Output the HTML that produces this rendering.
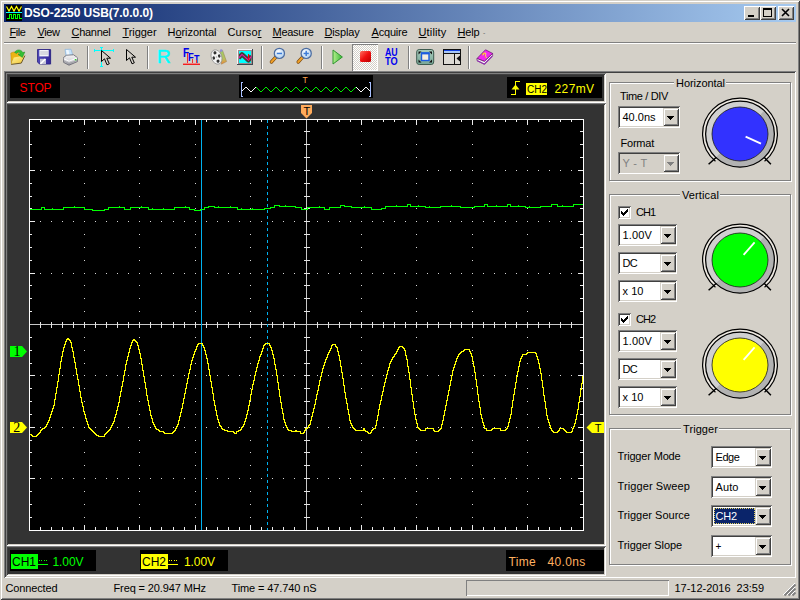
<!DOCTYPE html><html><head><meta charset="utf-8"><title>DSO-2250 USB(7.0.0.0)</title><style>
*{box-sizing:border-box}
html,body{margin:0;padding:0}
body{width:800px;height:600px;overflow:hidden;background:#D4D0C8;position:relative;font-family:"Liberation Sans",sans-serif;font-size:11px;color:#000}
.a{position:absolute}
.t{position:absolute;white-space:nowrap;line-height:14px;height:14px}
.sunk{position:absolute;box-shadow:inset 1px 1px 0 #808080,inset -1px -1px 0 #fff,inset 2px 2px 0 #404040,inset -2px -2px 0 #D4D0C8}
.btn{position:absolute;background:#D4D0C8;box-shadow:inset 1px 1px 0 #fff,inset -1px -1px 0 #404040,inset 2px 2px 0 #D4D0C8,inset -2px -2px 0 #808080}
.cbtn{position:absolute;background:#D4D0C8;box-shadow:inset 1px 1px 0 #D4D0C8,inset -1px -1px 0 #404040,inset 2px 2px 0 #fff,inset -2px -2px 0 #808080}
.grp{position:absolute;border:1px solid #808080;box-shadow:1px 1px 0 #fff,inset 1px 1px 0 #fff}
.cap{position:absolute;background:#D4D0C8;white-space:nowrap;line-height:14px;height:14px;text-align:center}
.sep{position:absolute;width:2px;border-left:1px solid #808080;border-right:1px solid #fff}
.u{text-decoration:underline}
svg{position:absolute;overflow:visible}
</style></head><body>
<div class="a" style="left:0px;top:0px;width:800px;height:600px;box-shadow:inset 1px 1px 0 #D4D0C8,inset -1px -1px 0 #404040,inset 2px 2px 0 #fff,inset -2px -2px 0 #808080"></div>
<div class="a" style="left:4px;top:4px;width:792px;height:18px;background:linear-gradient(to right,#0A246A 0%,#A6CAF0 100%)"></div>
<svg class="a" style="left:6px;top:5px" width="16" height="16" shape-rendering="crispEdges"><rect width="16" height="16" fill="#000"/><path d="M0.5 1.5 L3 6 L5.5 1.5 L8 6 L10.5 1.5 L13 6 L15.5 1.5" fill="none" stroke="#FFFF00" stroke-width="1.2" shape-rendering="auto"/><rect x="0" y="7" width="16" height="1" fill="#00FFFF"/><path d="M1 13.5H3.5V9.5H5.5V13.5H7.5V9.5H9.5V13.5H11.5V9.5H13.5V13.5H15.5" fill="none" stroke="#00FF00" stroke-width="1"/></svg>
<div class="t" style="left:24px;top:6px;color:#fff;font-weight:bold;font-size:12px;letter-spacing:-0.051px;">DSO-2250 USB(7.0.0.0)</div>
<div class="btn" style="left:744px;top:6px;width:16px;height:14px;"></div>
<div class="btn" style="left:760px;top:6px;width:16px;height:14px;"></div>
<div class="btn" style="left:778px;top:6px;width:16px;height:14px;"></div>
<svg class="a" style="left:744px;top:6px" width="50" height="14" shape-rendering="crispEdges"><rect x="4" y="9" width="6" height="2" fill="#000"/><rect x="19.5" y="2.5" width="8" height="8" fill="none" stroke="#000"/><rect x="19" y="2" width="9" height="2" fill="#000"/><path d="M38 3 L45 10 M45 3 L38 10" stroke="#000" stroke-width="1.6" shape-rendering="auto" fill="none"/></svg>
<div class="t" style="left:9.5px;top:25px;font-size:11px;letter-spacing:-0.438px;"><span class="u">F</span>ile</div>
<div class="t" style="left:37.5px;top:25px;font-size:11px;letter-spacing:-0.414px;"><span class="u">V</span>iew</div>
<div class="t" style="left:71.5px;top:25px;font-size:11px;letter-spacing:-0.286px;"><span class="u">C</span>hannel</div>
<div class="t" style="left:122.5px;top:25px;font-size:11px;letter-spacing:-0.062px;"><span class="u">T</span>rigger</div>
<div class="t" style="left:167.5px;top:25px;font-size:11px;letter-spacing:-0.055px;">H<span class="u">o</span>rizontal</div>
<div class="t" style="left:227.5px;top:25px;font-size:11px;letter-spacing:0.164px;">Curso<span class="u">r</span></div>
<div class="t" style="left:272.5px;top:25px;font-size:11px;letter-spacing:-0.259px;"><span class="u">M</span>easure</div>
<div class="t" style="left:324.5px;top:25px;font-size:11px;letter-spacing:-0.154px;"><span class="u">D</span>isplay</div>
<div class="t" style="left:371.5px;top:25px;font-size:11px;letter-spacing:-0.188px;"><span class="u">A</span>cquire</div>
<div class="t" style="left:418.5px;top:25px;font-size:11px;letter-spacing:0.156px;"><span class="u">U</span>tility</div>
<div class="t" style="left:457.5px;top:25px;font-size:11px;letter-spacing:-0.160px;"><span class="u">H</span>elp</div>
<div class="t" style="left:483px;top:26px;font-size:7px;color:#666">-</div>
<div class="a" style="left:4px;top:42px;width:792px;height:2px;border-top:1px solid #808080;border-bottom:1px solid #fff"></div>
<div class="sep" style="left:87px;top:46px;width:2px;height:23px;"></div>
<div class="sep" style="left:147px;top:46px;width:2px;height:23px;"></div>
<div class="sep" style="left:261px;top:46px;width:2px;height:23px;"></div>
<div class="sep" style="left:321px;top:46px;width:2px;height:23px;"></div>
<div class="sep" style="left:408px;top:46px;width:2px;height:23px;"></div>
<div class="sep" style="left:468px;top:46px;width:2px;height:23px;"></div>
<div class="a" style="left:352px;top:44px;width:26px;height:27px;background-color:#D4D0C8;background-image:linear-gradient(45deg,#fff 25%,transparent 25%,transparent 75%,#fff 75%),linear-gradient(45deg,#fff 25%,transparent 25%,transparent 75%,#fff 75%);background-size:2px 2px;background-position:0 0,1px 1px;box-shadow:inset 1px 1px 0 #808080,inset -1px -1px 0 #fff"></div>
<svg class="a" style="left:0;top:0" width="800" height="72">
<defs><linearGradient id="gF" x1="0" y1="0" x2="1" y2="1"><stop offset="0" stop-color="#FFF59A"/><stop offset="1" stop-color="#F2C230"/></linearGradient><linearGradient id="gP" x1="0" y1="0" x2="1" y2="0"><stop offset="0" stop-color="#B4F08C"/><stop offset="1" stop-color="#38B838"/></linearGradient><linearGradient id="gR" x1="0" y1="0" x2="1" y2="1"><stop offset="0" stop-color="#FF7060"/><stop offset=".5" stop-color="#F01010"/><stop offset="1" stop-color="#B80000"/></linearGradient><linearGradient id="gM" x1="0" y1="0" x2="0" y2="1"><stop offset="0" stop-color="#A8CCBC"/><stop offset="1" stop-color="#78A898"/></linearGradient><radialGradient id="gL" cx=".4" cy=".35" r=".7"><stop offset="0" stop-color="#FFFFFF"/><stop offset="1" stop-color="#A8CCF0"/></radialGradient><linearGradient id="gS" x1="0" y1="0" x2="1" y2="0"><stop offset="0" stop-color="#5048B8"/><stop offset="1" stop-color="#34289A"/></linearGradient><linearGradient id="gPr" x1="0" y1="0" x2="0" y2="1"><stop offset="0" stop-color="#F6F6F6"/><stop offset=".45" stop-color="#DCDCE0"/><stop offset="1" stop-color="#9A9AA2"/></linearGradient></defs>
<path d="M10.8 53 L13.4 52 L18 52.5 L19 54 L22.6 54.2 L22.6 58 L12.4 60 L11.4 64.2 Z" fill="#ECB414" stroke="#B88A10" stroke-width=".5"/><path d="M11.4 64.3 L13.8 57.6 L24.8 55.6 L21.2 63 Z" fill="url(#gF)"/><path d="M11.2 64.4 L21.3 63.1 L24.9 55.6" fill="none" stroke="#5E4A1C" stroke-width=".9"/><path d="M14.6 52.4 C16 49.4 21.2 48.8 22.8 52.6 L24.8 52 L22.4 57.4 L18 54.4 L20.4 53.8 C19.4 52 17.6 51.8 16.6 53.4 Z" fill="#34C034" stroke="#1E8A1E" stroke-width=".5"/>
<path d="M38 49.8H51.4V64.6H39.8L38 62.8Z" fill="#8890B8" opacity=".6"/><path d="M37.5 49.5H50.5V64H39.5L37.5 62Z" fill="url(#gS)" stroke="#282080" stroke-width=".8"/><rect x="39.3" y="50" width="9.4" height="6.4" fill="#F4F4F8"/><path d="M40.2 52H48M40.2 54H48" stroke="#B4B4C4" stroke-width=".9"/><rect x="40" y="58.8" width="6" height="5.2" fill="#C4C4D8"/><path d="M40.4 63.8 L45.4 59" stroke="#fff" stroke-width="1.6"/>
<path d="M65 49.4 L71 49.2 L72.8 55.2 L66 56.2 Z" fill="#C4E2FA" stroke="#8CB4DC" stroke-width=".7"/><path d="M66 50 L68.5 50 L69.6 55 L67 55.6Z" fill="#EEF7FF"/><path d="M63.6 57.4 L66.6 55.2 L73.6 54.8 L77.4 57.6 L77.4 61.6 L69 65.2 L63.6 62.4 Z" fill="url(#gPr)" stroke="#62626C" stroke-width=".8"/><path d="M63.8 58.8 L69 61.2 L77.2 58" fill="none" stroke="#FFFFFF" stroke-width=".9"/><path d="M64 61 L69 63.6 L77.2 60.4" fill="none" stroke="#9A9AA0" stroke-width=".8"/><rect x="74.8" y="59" width="1.5" height="1.4" fill="#30D030"/>
<path d="M94 50.5H114M101.5 47V67M94.5 49V52M113.5 49V52M100 47.5H103M100 66.5H103" stroke="#00FFFF" stroke-width="1" fill="none" shape-rendering="crispEdges"/>
<path transform="translate(101,50)" d="M0.5 0.5V11.5L3.5 8.8L6 14.8L8.3 13.8L5.8 8.2H9.5Z" fill="#D4D0C8" stroke="#000" stroke-width="1" stroke-linejoin="miter"/>
<path transform="translate(126,49)" d="M0.5 0.5V11.5L3.5 8.8L6 14.8L8.3 13.8L5.8 8.2H9.5Z" fill="#D4D0C8" stroke="#000" stroke-width="1" stroke-linejoin="miter"/>
<defs><clipPath id="cS"><rect x="239" y="51" width="12.5" height="12.5"/></clipPath></defs><g shape-rendering="crispEdges"><rect x="237" y="49" width="16" height="16" fill="#404850"/><rect x="237" y="49" width="15" height="15" fill="#F4F4F8"/><rect x="238" y="50" width="14" height="14" fill="#A08888"/><rect x="239" y="51" width="12" height="12" fill="#00FFFF"/></g><g clip-path="url(#cS)"><path d="M238.6 58 L242 54.4 L248.5 60.2 L251.6 56" fill="none" stroke="#3E4436" stroke-width="4.6" stroke-linejoin="round"/><path d="M238.6 58 L242 54.4 L248.5 60.2 L251.6 56" fill="none" stroke="#F010B0" stroke-width="1.1"/><path d="M248.5 54V60" stroke="#FF0000" stroke-width="1.1"/></g>
<path d="M275.79999999999995 57.2 L271.4 62" stroke="#7A4A10" stroke-width="3.4" stroke-linecap="round"/><path d="M275.79999999999995 57.2 L271.4 62" stroke="#F0A028" stroke-width="2" stroke-linecap="round"/><circle cx="279.4" cy="53.4" r="5.1" fill="url(#gL)" stroke="#4C6CA0" stroke-width="1.2"/><rect x="276.79999999999995" y="52.7" width="5.2" height="1.5" fill="#3C7CD8"/>
<path d="M302.59999999999997 57.2 L298.2 62" stroke="#7A4A10" stroke-width="3.4" stroke-linecap="round"/><path d="M302.59999999999997 57.2 L298.2 62" stroke="#F0A028" stroke-width="2" stroke-linecap="round"/><circle cx="306.2" cy="53.4" r="5.1" fill="url(#gL)" stroke="#4C6CA0" stroke-width="1.2"/><rect x="303.59999999999997" y="52.7" width="5.2" height="1.5" fill="#3C7CD8"/><rect x="305.45" y="50.8" width="1.5" height="5.2" fill="#3C7CD8"/>
<path d="M333 50 L333 64 L342.4 57Z" fill="url(#gP)" stroke="#2E962E" stroke-width="1" stroke-linejoin="round"/>
<rect x="360" y="51" width="11" height="11" rx="1.5" fill="url(#gR)"/>
<defs><linearGradient id="gC" x1="0" y1="0" x2="0" y2="1"><stop offset="0" stop-color="#9CCB6A"/><stop offset=".6" stop-color="#B8C060"/><stop offset="1" stop-color="#F08838"/></linearGradient></defs><path d="M220.3 50.8 L222.6 50.4 L226.6 61.6 L221.4 64.2 Z" fill="url(#gC)" stroke="#8A7040" stroke-width=".4"/><circle cx="221.2" cy="50.6" r="1.3" fill="#9090D8"/><g transform="rotate(-20 216.5 57)"><ellipse cx="216.5" cy="57" rx="5.2" ry="7.4" fill="#F2F2F2" stroke="#8C8C8C" stroke-width=".7"/><ellipse cx="216.5" cy="52.6" rx="1.5" ry="1.6" fill="#303030"/><ellipse cx="216.5" cy="61.4" rx="1.5" ry="1.6" fill="#303030"/><ellipse cx="213.6" cy="57" rx="1.2" ry="1.7" fill="#303030"/><ellipse cx="219.4" cy="57" rx="1.2" ry="1.7" fill="#303030"/><circle cx="216.5" cy="57" r=".8" fill="#B0B0B0"/></g>
<rect x="416.7" y="49.5" width="17" height="15" rx="2.5" fill="url(#gM)" stroke="#3E5C50" stroke-width="1"/><path d="M418.5 51.5h3l-3 3zM432 51.5h-3l3 3zM418.5 62.5h3l-3 -3zM432 62.5h-3l3 -3z" fill="#101010"/><rect x="421.5" y="53" width="7.5" height="7.5" fill="#F4EEE0" stroke="#1C5CE0" stroke-width="1.4"/><rect x="421" y="52.4" width="8.5" height="2" fill="#1C5CE0"/>
<g shape-rendering="crispEdges"><rect x="443.5" y="49.5" width="17" height="15" fill="#DCDAD4" stroke="#101010"/><rect x="444" y="50" width="16" height="1" fill="#1040E0"/><rect x="444" y="51" width="16" height="2" fill="#A8C8F8"/><rect x="443" y="53" width="18" height="1" fill="#101010"/><rect x="454" y="53" width="1" height="11" fill="#101010"/></g><path d="M460 55.5 L456.5 58.5 L460 61.5Z" fill="#101010"/>
<path d="M477 58.5 L485.5 49.8 L492.6 53.4 L484.4 61.4Z" fill="#F028F0" stroke="#701878" stroke-width=".8"/><path d="M477 58.5 L477 60.6 L484.4 64.2 L492.6 55.6 L492.6 53.4 L484.4 61.4Z" fill="#F4F4F4" stroke="#701878" stroke-width=".8"/><path d="M477.4 60.8 L484.4 64.2 L492.4 56" fill="none" stroke="#9030B0" stroke-width="1.1"/>
</svg>
<div class="t" style="left:157px;top:47px;font-size:19px;line-height:20px;height:20px;color:#00FFFF;-webkit-text-stroke:0.5px #00FFFF">R</div>
<div class="t" style="left:182.5px;top:46px;font-size:12px;font-weight:bold;color:#0000E8;transform:scaleX(.85);transform-origin:0 0">F</div>
<div class="t" style="left:188px;top:50px;font-size:10.5px;font-weight:bold;color:#0000E8;transform:scaleX(.9);transform-origin:0 0">F</div>
<div class="t" style="left:193.5px;top:53px;font-size:10px;font-weight:bold;color:#0000E8;transform:scaleX(.9);transform-origin:0 0">T</div>
<div class="a" style="left:183px;top:63px;width:17px;height:1px;background:#F08080"></div>
<div class="a" style="left:183px;top:64px;width:17px;height:1px;background:#F02020"></div>
<div class="a" style="left:187px;top:53px;width:1px;height:10px;background:#F03030"></div>
<div class="a" style="left:192px;top:59px;width:1px;height:4px;background:#F03030"></div>
<div class="a" style="left:196px;top:60px;width:1px;height:3px;background:#F03030"></div>
<div class="t" style="left:482.5px;top:50.5px;font-size:8px;font-weight:bold;color:#FFE000;line-height:10px;height:10px;transform:rotate(-35deg)">?</div>
<div class="t" style="left:385px;top:48px;font-size:10px;font-weight:bold;color:#0000F0;line-height:9px;height:9px;transform:scaleX(.88);transform-origin:0 0">AU</div>
<div class="t" style="left:385px;top:56.5px;font-size:10px;font-weight:bold;color:#0000F0;line-height:9px;height:9px;transform:scaleX(.92);transform-origin:0 0">TO</div>
<div class="sunk" style="left:4px;top:71px;width:792px;height:507px;"></div>
<div class="sunk" style="left:6px;top:73px;width:600px;height:30px;background:#333333"></div>
<div class="sunk" style="left:6px;top:103px;width:600px;height:443px;background:#333333"></div>
<div class="sunk" style="left:6px;top:546px;width:600px;height:30px;background:#333333"></div>
<div class="a" style="left:10px;top:77px;width:50px;height:21px;background:#000"></div>
<div class="t" style="left:19.5px;top:81px;color:#FF0000;font-size:12px;letter-spacing:-0.117px;">STOP</div>
<div class="a" style="left:239px;top:75px;width:134px;height:23px;background:#000"></div>
<div class="a" style="left:507px;top:77px;width:95px;height:21px;background:#000"></div>
<div class="a" style="left:526px;top:83px;width:21px;height:12px;background:#FFFF00"></div>
<div class="t" style="left:527px;top:82.7px;color:#000;font-size:10px;">CH2</div>
<div class="t" style="left:554.5px;top:81.6px;color:#FFFF00;font-size:12px;letter-spacing:0.394px;">227mV</div>
<div class="a" style="left:10px;top:550px;width:86px;height:21px;background:#000"></div>
<div class="a" style="left:11px;top:554px;width:27px;height:15px;background:#00FF00"></div>
<div class="t" style="left:12px;top:555px;color:#000;font-size:12px;">CH1</div>
<div class="t" style="left:52.5px;top:555px;color:#00FF00;font-size:12px;letter-spacing:-0.072px;">1.00V</div>
<div class="a" style="left:140px;top:550px;width:88px;height:21px;background:#000"></div>
<div class="a" style="left:141px;top:554px;width:27px;height:15px;background:#FFFF00"></div>
<div class="t" style="left:142px;top:555px;color:#000;font-size:12px;">CH2</div>
<div class="t" style="left:184px;top:555px;color:#FFFF00;font-size:12px;letter-spacing:-0.072px;">1.00V</div>
<div class="a" style="left:506px;top:550px;width:98px;height:21px;background:#000"></div>
<div class="t" style="left:508.5px;top:555px;color:#FFB060;font-size:12px;letter-spacing:0.316px;">Time</div>
<div class="t" style="left:547.5px;top:555px;color:#FFB060;font-size:12px;letter-spacing:0.328px;">40.0ns</div>
<svg class="a" style="left:0;top:0" width="800" height="600" shape-rendering="crispEdges">
<path d="M242 90.5h1M243 89.5h1M244 88.5h1M245 87.5h1M246 87.5h1M247 88.5h1M248 89.5h1M249 90.5h1M250 91.5h1M251 91.5h1M252 90.5h1M253 89.5h1M254 88.5h1M255 87.5h1M356 87.5h1M357 88.5h1M358 89.5h1M359 90.5h1M360 91.5h1M361 91.5h1M362 90.5h1M363 89.5h1M364 88.5h1M365 87.5h1M366 87.5h1M367 88.5h1M368 89.5h1M369 90.5h1" stroke="#fff" fill="none"/>
<path d="M256 87.5h1M257 88.5h1M258 89.5h1M259 90.5h1M260 91.5h1M261 91.5h1M262 90.5h1M263 89.5h1M264 88.5h1M265 87.5h1M266 87.5h1M267 88.5h1M268 89.5h1M269 90.5h1M270 91.5h1M271 91.5h1M272 90.5h1M273 89.5h1M274 88.5h1M275 87.5h1M276 87.5h1M277 88.5h1M278 89.5h1M279 90.5h1M280 91.5h1M281 91.5h1M282 90.5h1M283 89.5h1M284 88.5h1M285 87.5h1M286 87.5h1M287 88.5h1M288 89.5h1M289 90.5h1M290 91.5h1M291 91.5h1M292 90.5h1M293 89.5h1M294 88.5h1M295 87.5h1M296 87.5h1M297 88.5h1M298 89.5h1M299 90.5h1M300 91.5h1M301 91.5h1M302 90.5h1M303 89.5h1M304 88.5h1M305 87.5h1M306 87.5h1M307 88.5h1M308 89.5h1M309 90.5h1M310 91.5h1M311 91.5h1M312 90.5h1M313 89.5h1M314 88.5h1M315 87.5h1M316 87.5h1M317 88.5h1M318 89.5h1M319 90.5h1M320 91.5h1M321 91.5h1M322 90.5h1M323 89.5h1M324 88.5h1M325 87.5h1M326 87.5h1M327 88.5h1M328 89.5h1M329 90.5h1M330 91.5h1M331 91.5h1M332 90.5h1M333 89.5h1M334 88.5h1M335 87.5h1M336 87.5h1M337 88.5h1M338 89.5h1M339 90.5h1M340 91.5h1M341 91.5h1M342 90.5h1M343 89.5h1M344 88.5h1M345 87.5h1M346 87.5h1M347 88.5h1M348 89.5h1M349 90.5h1M350 91.5h1M351 91.5h1M352 90.5h1M353 89.5h1M354 88.5h1M355 87.5h1" stroke="#00E800" fill="none"/>
<path d="M243 82.5H241.5V96.5H243M369 82.5H370.5V96.5H369" fill="none" stroke="#A8C0FF"/>
<path d="M511 94.5H515.5V81.5H520" fill="none" stroke="#FFFF00" stroke-width="1"/><path d="M511.5 89.5 L515.5 84.5 L519.5 89.5Z" fill="#FFFF00" shape-rendering="auto"/>
<path d="M38 564.5H48" stroke="#00FF00"/><path d="M39 560.5H48" stroke="#00FF00" stroke-dasharray="1 1.25"/>
<path d="M168 564.5H178" stroke="#FFFF00"/><path d="M169 560.5H178" stroke="#FFFF00" stroke-dasharray="1 1.25"/>
<rect x="29" y="119" width="555" height="412" fill="#000"/>
<path d="M29 119.5h555M29 530.5h555M29.5 119v412M583.5 119v412" stroke="#fff" stroke-width="1" fill="none"/>
<path d="M40.5 120v2M40.5 527v3M51.5 120v2M51.5 527v3M62.5 120v2M62.5 527v3M73.5 120v2M73.5 527v3M84.5 120v5M84.5 525v5M95.5 120v2M95.5 527v3M106.5 120v2M106.5 527v3M117.5 120v2M117.5 527v3M128.5 120v2M128.5 527v3M139.5 120v5M139.5 525v5M150.5 120v2M150.5 527v3M161.5 120v2M161.5 527v3M173.5 120v2M173.5 527v3M184.5 120v2M184.5 527v3M195.5 120v5M195.5 525v5M206.5 120v2M206.5 527v3M217.5 120v2M217.5 527v3M228.5 120v2M228.5 527v3M239.5 120v2M239.5 527v3M250.5 120v5M250.5 525v5M261.5 120v2M261.5 527v3M272.5 120v2M272.5 527v3M283.5 120v2M283.5 527v3M294.5 120v2M294.5 527v3M306.5 120v5M306.5 525v5M317.5 120v2M317.5 527v3M328.5 120v2M328.5 527v3M339.5 120v2M339.5 527v3M350.5 120v2M350.5 527v3M361.5 120v5M361.5 525v5M372.5 120v2M372.5 527v3M383.5 120v2M383.5 527v3M394.5 120v2M394.5 527v3M405.5 120v2M405.5 527v3M416.5 120v5M416.5 525v5M427.5 120v2M427.5 527v3M438.5 120v2M438.5 527v3M450.5 120v2M450.5 527v3M461.5 120v2M461.5 527v3M472.5 120v5M472.5 525v5M483.5 120v2M483.5 527v3M494.5 120v2M494.5 527v3M505.5 120v2M505.5 527v3M516.5 120v2M516.5 527v3M527.5 120v5M527.5 525v5M538.5 120v2M538.5 527v3M549.5 120v2M549.5 527v3M560.5 120v2M560.5 527v3M571.5 120v2M571.5 527v3M30 131.5h2M580 131.5h3M30 144.5h2M580 144.5h3M30 157.5h2M580 157.5h3M30 170.5h5M578 170.5h5M30 183.5h2M580 183.5h3M30 196.5h2M580 196.5h3M30 208.5h2M580 208.5h3M30 221.5h5M578 221.5h5M30 234.5h2M580 234.5h3M30 247.5h2M580 247.5h3M30 260.5h2M580 260.5h3M30 273.5h5M578 273.5h5M30 285.5h2M580 285.5h3M30 298.5h2M580 298.5h3M30 311.5h2M580 311.5h3M30 324.5h5M578 324.5h5M30 337.5h2M580 337.5h3M30 350.5h2M580 350.5h3M30 363.5h2M580 363.5h3M30 375.5h5M578 375.5h5M30 388.5h2M580 388.5h3M30 401.5h2M580 401.5h3M30 414.5h2M580 414.5h3M30 427.5h5M578 427.5h5M30 440.5h2M580 440.5h3M30 452.5h2M580 452.5h3M30 465.5h2M580 465.5h3M30 478.5h5M578 478.5h5M30 491.5h2M580 491.5h3M30 504.5h2M580 504.5h3M30 517.5h2M580 517.5h3" stroke="#ECECEC" stroke-width="1" fill="none"/>
<path d="M40 170.5h1M51 170.5h1M62 170.5h1M73 170.5h1M84 170.5h1M95 170.5h1M106 170.5h1M117 170.5h1M128 170.5h1M139 170.5h1M150 170.5h1M161 170.5h1M173 170.5h1M184 170.5h1M195 170.5h1M206 170.5h1M217 170.5h1M228 170.5h1M239 170.5h1M250 170.5h1M261 170.5h1M272 170.5h1M283 170.5h1M294 170.5h1M306 170.5h1M317 170.5h1M328 170.5h1M339 170.5h1M350 170.5h1M361 170.5h1M372 170.5h1M383 170.5h1M394 170.5h1M405 170.5h1M416 170.5h1M427 170.5h1M438 170.5h1M450 170.5h1M461 170.5h1M472 170.5h1M483 170.5h1M494 170.5h1M505 170.5h1M516 170.5h1M527 170.5h1M538 170.5h1M549 170.5h1M560 170.5h1M571 170.5h1M40 221.5h1M51 221.5h1M62 221.5h1M73 221.5h1M84 221.5h1M95 221.5h1M106 221.5h1M117 221.5h1M128 221.5h1M139 221.5h1M150 221.5h1M161 221.5h1M173 221.5h1M184 221.5h1M195 221.5h1M206 221.5h1M217 221.5h1M228 221.5h1M239 221.5h1M250 221.5h1M261 221.5h1M272 221.5h1M283 221.5h1M294 221.5h1M306 221.5h1M317 221.5h1M328 221.5h1M339 221.5h1M350 221.5h1M361 221.5h1M372 221.5h1M383 221.5h1M394 221.5h1M405 221.5h1M416 221.5h1M427 221.5h1M438 221.5h1M450 221.5h1M461 221.5h1M472 221.5h1M483 221.5h1M494 221.5h1M505 221.5h1M516 221.5h1M527 221.5h1M538 221.5h1M549 221.5h1M560 221.5h1M571 221.5h1M40 273.5h1M51 273.5h1M62 273.5h1M73 273.5h1M84 273.5h1M95 273.5h1M106 273.5h1M117 273.5h1M128 273.5h1M139 273.5h1M150 273.5h1M161 273.5h1M173 273.5h1M184 273.5h1M195 273.5h1M206 273.5h1M217 273.5h1M228 273.5h1M239 273.5h1M250 273.5h1M261 273.5h1M272 273.5h1M283 273.5h1M294 273.5h1M306 273.5h1M317 273.5h1M328 273.5h1M339 273.5h1M350 273.5h1M361 273.5h1M372 273.5h1M383 273.5h1M394 273.5h1M405 273.5h1M416 273.5h1M427 273.5h1M438 273.5h1M450 273.5h1M461 273.5h1M472 273.5h1M483 273.5h1M494 273.5h1M505 273.5h1M516 273.5h1M527 273.5h1M538 273.5h1M549 273.5h1M560 273.5h1M571 273.5h1M40 375.5h1M51 375.5h1M62 375.5h1M73 375.5h1M84 375.5h1M95 375.5h1M106 375.5h1M117 375.5h1M128 375.5h1M139 375.5h1M150 375.5h1M161 375.5h1M173 375.5h1M184 375.5h1M195 375.5h1M206 375.5h1M217 375.5h1M228 375.5h1M239 375.5h1M250 375.5h1M261 375.5h1M272 375.5h1M283 375.5h1M294 375.5h1M306 375.5h1M317 375.5h1M328 375.5h1M339 375.5h1M350 375.5h1M361 375.5h1M372 375.5h1M383 375.5h1M394 375.5h1M405 375.5h1M416 375.5h1M427 375.5h1M438 375.5h1M450 375.5h1M461 375.5h1M472 375.5h1M483 375.5h1M494 375.5h1M505 375.5h1M516 375.5h1M527 375.5h1M538 375.5h1M549 375.5h1M560 375.5h1M571 375.5h1M40 427.5h1M51 427.5h1M62 427.5h1M73 427.5h1M84 427.5h1M95 427.5h1M106 427.5h1M117 427.5h1M128 427.5h1M139 427.5h1M150 427.5h1M161 427.5h1M173 427.5h1M184 427.5h1M195 427.5h1M206 427.5h1M217 427.5h1M228 427.5h1M239 427.5h1M250 427.5h1M261 427.5h1M272 427.5h1M283 427.5h1M294 427.5h1M306 427.5h1M317 427.5h1M328 427.5h1M339 427.5h1M350 427.5h1M361 427.5h1M372 427.5h1M383 427.5h1M394 427.5h1M405 427.5h1M416 427.5h1M427 427.5h1M438 427.5h1M450 427.5h1M461 427.5h1M472 427.5h1M483 427.5h1M494 427.5h1M505 427.5h1M516 427.5h1M527 427.5h1M538 427.5h1M549 427.5h1M560 427.5h1M571 427.5h1M40 478.5h1M51 478.5h1M62 478.5h1M73 478.5h1M84 478.5h1M95 478.5h1M106 478.5h1M117 478.5h1M128 478.5h1M139 478.5h1M150 478.5h1M161 478.5h1M173 478.5h1M184 478.5h1M195 478.5h1M206 478.5h1M217 478.5h1M228 478.5h1M239 478.5h1M250 478.5h1M261 478.5h1M272 478.5h1M283 478.5h1M294 478.5h1M306 478.5h1M317 478.5h1M328 478.5h1M339 478.5h1M350 478.5h1M361 478.5h1M372 478.5h1M383 478.5h1M394 478.5h1M405 478.5h1M416 478.5h1M427 478.5h1M438 478.5h1M450 478.5h1M461 478.5h1M472 478.5h1M483 478.5h1M494 478.5h1M505 478.5h1M516 478.5h1M527 478.5h1M538 478.5h1M549 478.5h1M560 478.5h1M571 478.5h1M84 131.5h1M84 144.5h1M84 157.5h1M84 170.5h1M84 183.5h1M84 196.5h1M84 208.5h1M84 221.5h1M84 234.5h1M84 247.5h1M84 260.5h1M84 273.5h1M84 285.5h1M84 298.5h1M84 311.5h1M84 324.5h1M84 337.5h1M84 350.5h1M84 363.5h1M84 375.5h1M84 388.5h1M84 401.5h1M84 414.5h1M84 427.5h1M84 440.5h1M84 452.5h1M84 465.5h1M84 478.5h1M84 491.5h1M84 504.5h1M84 517.5h1M139 131.5h1M139 144.5h1M139 157.5h1M139 170.5h1M139 183.5h1M139 196.5h1M139 208.5h1M139 221.5h1M139 234.5h1M139 247.5h1M139 260.5h1M139 273.5h1M139 285.5h1M139 298.5h1M139 311.5h1M139 324.5h1M139 337.5h1M139 350.5h1M139 363.5h1M139 375.5h1M139 388.5h1M139 401.5h1M139 414.5h1M139 427.5h1M139 440.5h1M139 452.5h1M139 465.5h1M139 478.5h1M139 491.5h1M139 504.5h1M139 517.5h1M195 131.5h1M195 144.5h1M195 157.5h1M195 170.5h1M195 183.5h1M195 196.5h1M195 208.5h1M195 221.5h1M195 234.5h1M195 247.5h1M195 260.5h1M195 273.5h1M195 285.5h1M195 298.5h1M195 311.5h1M195 324.5h1M195 337.5h1M195 350.5h1M195 363.5h1M195 375.5h1M195 388.5h1M195 401.5h1M195 414.5h1M195 427.5h1M195 440.5h1M195 452.5h1M195 465.5h1M195 478.5h1M195 491.5h1M195 504.5h1M195 517.5h1M250 131.5h1M250 144.5h1M250 157.5h1M250 170.5h1M250 183.5h1M250 196.5h1M250 208.5h1M250 221.5h1M250 234.5h1M250 247.5h1M250 260.5h1M250 273.5h1M250 285.5h1M250 298.5h1M250 311.5h1M250 324.5h1M250 337.5h1M250 350.5h1M250 363.5h1M250 375.5h1M250 388.5h1M250 401.5h1M250 414.5h1M250 427.5h1M250 440.5h1M250 452.5h1M250 465.5h1M250 478.5h1M250 491.5h1M250 504.5h1M250 517.5h1M361 131.5h1M361 144.5h1M361 157.5h1M361 170.5h1M361 183.5h1M361 196.5h1M361 208.5h1M361 221.5h1M361 234.5h1M361 247.5h1M361 260.5h1M361 273.5h1M361 285.5h1M361 298.5h1M361 311.5h1M361 324.5h1M361 337.5h1M361 350.5h1M361 363.5h1M361 375.5h1M361 388.5h1M361 401.5h1M361 414.5h1M361 427.5h1M361 440.5h1M361 452.5h1M361 465.5h1M361 478.5h1M361 491.5h1M361 504.5h1M361 517.5h1M416 131.5h1M416 144.5h1M416 157.5h1M416 170.5h1M416 183.5h1M416 196.5h1M416 208.5h1M416 221.5h1M416 234.5h1M416 247.5h1M416 260.5h1M416 273.5h1M416 285.5h1M416 298.5h1M416 311.5h1M416 324.5h1M416 337.5h1M416 350.5h1M416 363.5h1M416 375.5h1M416 388.5h1M416 401.5h1M416 414.5h1M416 427.5h1M416 440.5h1M416 452.5h1M416 465.5h1M416 478.5h1M416 491.5h1M416 504.5h1M416 517.5h1M472 131.5h1M472 144.5h1M472 157.5h1M472 170.5h1M472 183.5h1M472 196.5h1M472 208.5h1M472 221.5h1M472 234.5h1M472 247.5h1M472 260.5h1M472 273.5h1M472 285.5h1M472 298.5h1M472 311.5h1M472 324.5h1M472 337.5h1M472 350.5h1M472 363.5h1M472 375.5h1M472 388.5h1M472 401.5h1M472 414.5h1M472 427.5h1M472 440.5h1M472 452.5h1M472 465.5h1M472 478.5h1M472 491.5h1M472 504.5h1M472 517.5h1M527 131.5h1M527 144.5h1M527 157.5h1M527 170.5h1M527 183.5h1M527 196.5h1M527 208.5h1M527 221.5h1M527 234.5h1M527 247.5h1M527 260.5h1M527 273.5h1M527 285.5h1M527 298.5h1M527 311.5h1M527 324.5h1M527 337.5h1M527 350.5h1M527 363.5h1M527 375.5h1M527 388.5h1M527 401.5h1M527 414.5h1M527 427.5h1M527 440.5h1M527 452.5h1M527 465.5h1M527 478.5h1M527 491.5h1M527 504.5h1M527 517.5h1" stroke="#D8D8D8" stroke-width="1" fill="none"/>
<path d="M306.5 120v410M30 324.5h553" stroke="#C8C8C8" stroke-width="1" fill="none"/>
<path d="M304 131.5h6M304 144.5h6M304 157.5h6M304 170.5h6M304 183.5h6M304 196.5h6M304 208.5h6M304 221.5h6M304 234.5h6M304 247.5h6M304 260.5h6M304 273.5h6M304 285.5h6M304 298.5h6M304 311.5h6M304 337.5h6M304 350.5h6M304 363.5h6M304 375.5h6M304 388.5h6M304 401.5h6M304 414.5h6M304 427.5h6M304 440.5h6M304 452.5h6M304 465.5h6M304 478.5h6M304 491.5h6M304 504.5h6M304 517.5h6M40.5 322v6M51.5 322v6M62.5 322v6M73.5 322v6M84.5 322v6M95.5 322v6M106.5 322v6M117.5 322v6M128.5 322v6M139.5 322v6M150.5 322v6M161.5 322v6M173.5 322v6M184.5 322v6M195.5 322v6M206.5 322v6M217.5 322v6M228.5 322v6M239.5 322v6M250.5 322v6M261.5 322v6M272.5 322v6M283.5 322v6M294.5 322v6M317.5 322v6M328.5 322v6M339.5 322v6M350.5 322v6M361.5 322v6M372.5 322v6M383.5 322v6M394.5 322v6M405.5 322v6M416.5 322v6M427.5 322v6M438.5 322v6M450.5 322v6M461.5 322v6M472.5 322v6M483.5 322v6M494.5 322v6M505.5 322v6M516.5 322v6M527.5 322v6M538.5 322v6M549.5 322v6M560.5 322v6M571.5 322v6" stroke="#E4E4E4" stroke-width="1" fill="none"/>
<path d="M201.5 120V530" stroke="#00B2F0"/>
<path d="M267.5 120V530" stroke="#00B2F0" stroke-dasharray="3 3"/>
<path d="M30 209.5H41.5V207.5H44.5V209.5H63.5V207.5H84.5V209.5H92.5V210.5H104.5V209.5H108.5V207.5H124.5V209.5H130.5V207.5H148.5V209.5H174.5V207.5H189.5V209.5H194.5V210.5H200.5V209.5H204.5V207.5H208.5V206.5H214.5V207.5H237.5V209.5H264.5V208.5H270.5V207.5H274.5V205.5H279.5V206.5H295.5V207.5H301.5V209.5H307.5V207.5H324.5V209.5H329.5V207.5H340.5V205.5H344.5V206.5H351.5V207.5H371.5V209.5H381.5V208.5H385.5V206.5H407.5V204.5H410.5V206.5H425.5V207.5H440.5V206.5H460.5V207.5H474.5V206.5H484.5V204.5H487.5V206.5H507.5V204.5H510.5V206.5H525.5V207.5H540.5V206.5H551.5V204.5H557.5V206.5H573.5V204.5H583M52.5 209.5V207.5M74.5 207.5V205.5M119.5 207.5V205.5M141.5 207.5V205.5M152.5 209.5V207.5M163.5 209.5V207.5M185.5 207.5V205.5M218.5 207.5V205.5M230.5 207.5V205.5M241.5 209.5V207.5M252.5 209.5V207.5M285.5 206.5V204.5M319.5 207.5V205.5M364.5 207.5V205.5M396.5 206.5V204.5M418.5 206.5V204.5M429.5 207.5V205.5M451.5 206.5V204.5M496.5 206.5V204.5M518.5 206.5V204.5M529.5 207.5V205.5M562.5 206.5V204.5" stroke="#00FF00" fill="none"/>
<path d="M30 434.5H31.5V435.5H32.5V436.5H36.5V435.5H37.5V434.5H38.5V433.5H39.5V432.5H40.5V430.5H41.5V429.5H42.5V428.5H44.5V427.5H45.5V426.5H46.5V424.5H47.5V422.5H48.5V420.5H49.5V417.5H50.5V414.5H51.5V411.5H52.5V408.5H53.5V405.5H54.5V399.5H55.5V393.5H56.5V387.5H57.5V381.5H58.5V374.5H59.5V368.5H60.5V361.5H61.5V356.5H62.5V351.5H63.5V347.5H64.5V344.5H65.5V341.5H66.5V339.5H67.5V338.5H68.5V339.5H69.5V340.5H70.5V342.5H71.5V347.5H72.5V351.5H73.5V357.5H74.5V362.5H75.5V368.5H76.5V374.5H77.5V379.5H78.5V385.5H79.5V391.5H80.5V397.5H81.5V402.5H82.5V406.5H83.5V411.5H84.5V414.5H85.5V418.5H86.5V421.5H87.5V424.5H88.5V427.5H89.5V428.5H90.5V429.5H91.5V430.5H92.5V431.5H93.5V432.5H94.5V433.5H95.5V434.5H96.5V435.5H98.5V436.5H104.5V434.5H105.5V433.5H106.5V432.5H107.5V431.5H108.5V430.5H109.5V429.5H110.5V427.5H111.5V425.5H112.5V423.5H113.5V421.5H114.5V417.5H115.5V414.5H116.5V410.5H117.5V406.5H118.5V402.5H119.5V396.5H120.5V391.5H121.5V386.5H122.5V381.5H123.5V375.5H124.5V370.5H125.5V364.5H126.5V360.5H127.5V356.5H128.5V352.5H129.5V348.5H130.5V345.5H131.5V342.5H132.5V340.5H133.5V339.5H134.5V340.5H135.5V341.5H136.5V342.5H137.5V345.5H138.5V349.5H139.5V353.5H140.5V358.5H141.5V364.5H142.5V370.5H143.5V376.5H144.5V382.5H145.5V388.5H146.5V395.5H147.5V400.5H148.5V405.5H149.5V410.5H150.5V415.5H151.5V418.5H152.5V422.5H153.5V424.5H154.5V426.5H155.5V428.5H156.5V429.5H158.5V430.5H159.5V431.5H163.5V432.5H164.5V433.5H172.5V432.5H173.5V431.5H174.5V430.5H175.5V428.5H176.5V426.5H177.5V424.5H178.5V420.5H179.5V416.5H180.5V412.5H181.5V408.5H182.5V403.5H183.5V398.5H184.5V393.5H185.5V388.5H186.5V383.5H187.5V378.5H188.5V373.5H189.5V369.5H190.5V364.5H191.5V360.5H192.5V357.5H193.5V354.5H194.5V351.5H195.5V349.5H196.5V346.5H197.5V344.5H198.5V343.5H202.5V345.5H203.5V347.5H204.5V350.5H205.5V354.5H206.5V358.5H207.5V363.5H208.5V369.5H209.5V375.5H210.5V381.5H211.5V387.5H212.5V393.5H213.5V400.5H214.5V405.5H215.5V410.5H216.5V415.5H217.5V419.5H218.5V422.5H219.5V425.5H220.5V426.5H221.5V428.5H222.5V429.5H224.5V430.5H227.5V431.5H233.5V432.5H234.5V433.5H236.5V431.5H238.5V430.5H240.5V429.5H241.5V427.5H242.5V426.5H243.5V424.5H244.5V421.5H245.5V418.5H246.5V414.5H247.5V410.5H248.5V405.5H249.5V400.5H250.5V394.5H251.5V389.5H252.5V384.5H253.5V380.5H254.5V375.5H255.5V371.5H256.5V367.5H257.5V363.5H258.5V360.5H259.5V356.5H260.5V354.5H261.5V351.5H262.5V348.5H263.5V345.5H264.5V344.5H265.5V343.5H269.5V345.5H270.5V347.5H271.5V350.5H272.5V354.5H273.5V358.5H274.5V364.5H275.5V369.5H276.5V375.5H277.5V382.5H278.5V389.5H279.5V396.5H280.5V402.5H281.5V408.5H282.5V413.5H283.5V419.5H284.5V422.5H285.5V425.5H286.5V427.5H287.5V429.5H288.5V430.5H291.5V431.5H295.5V430.5H296.5V431.5H300.5V433.5H303.5V432.5H304.5V430.5H305.5V428.5H307.5V427.5H308.5V425.5H309.5V424.5H310.5V420.5H311.5V416.5H312.5V412.5H313.5V408.5H314.5V404.5H315.5V399.5H316.5V394.5H317.5V390.5H318.5V385.5H319.5V380.5H320.5V376.5H321.5V372.5H322.5V368.5H323.5V365.5H324.5V362.5H325.5V359.5H326.5V357.5H327.5V354.5H328.5V352.5H329.5V350.5H330.5V348.5H331.5V345.5H332.5V344.5H335.5V346.5H336.5V347.5H337.5V351.5H338.5V355.5H339.5V360.5H340.5V366.5H341.5V372.5H342.5V378.5H343.5V385.5H344.5V392.5H345.5V398.5H346.5V403.5H347.5V409.5H348.5V414.5H349.5V420.5H350.5V423.5H351.5V425.5H352.5V427.5H353.5V428.5H354.5V429.5H355.5V430.5H363.5V428.5H364.5V430.5H365.5V431.5H367.5V432.5H368.5V433.5H370.5V432.5H371.5V430.5H372.5V429.5H373.5V428.5H375.5V425.5H376.5V420.5H377.5V415.5H378.5V409.5H379.5V404.5H380.5V400.5H381.5V395.5H382.5V391.5H383.5V386.5H384.5V382.5H385.5V378.5H386.5V374.5H387.5V370.5H388.5V367.5H389.5V363.5H390.5V361.5H391.5V359.5H392.5V357.5H393.5V356.5H394.5V354.5H395.5V353.5H396.5V351.5H397.5V349.5H398.5V347.5H399.5V346.5H402.5V347.5H403.5V348.5H404.5V350.5H405.5V355.5H406.5V359.5H407.5V366.5H408.5V372.5H409.5V379.5H410.5V387.5H411.5V394.5H412.5V401.5H413.5V408.5H414.5V414.5H415.5V419.5H416.5V423.5H417.5V427.5H418.5V428.5H419.5V429.5H420.5V430.5H425.5V428.5H433.5V430.5H434.5V431.5H438.5V430.5H439.5V429.5H440.5V428.5H441.5V424.5H442.5V420.5H443.5V415.5H444.5V410.5H445.5V405.5H446.5V400.5H447.5V395.5H448.5V390.5H449.5V385.5H450.5V380.5H451.5V375.5H452.5V370.5H453.5V367.5H454.5V364.5H455.5V361.5H456.5V358.5H457.5V356.5H458.5V354.5H459.5V353.5H460.5V352.5H461.5V351.5H463.5V350.5H464.5V349.5H469.5V351.5H470.5V353.5H471.5V356.5H472.5V361.5H473.5V366.5H474.5V372.5H475.5V379.5H476.5V386.5H477.5V394.5H478.5V401.5H479.5V407.5H480.5V414.5H481.5V418.5H482.5V422.5H483.5V425.5H484.5V428.5H486.5V430.5H491.5V429.5H492.5V428.5H500.5V430.5H505.5V429.5H506.5V428.5H507.5V426.5H508.5V422.5H509.5V418.5H510.5V414.5H511.5V407.5H512.5V400.5H513.5V394.5H514.5V388.5H515.5V382.5H516.5V376.5H517.5V371.5H518.5V366.5H519.5V361.5H520.5V358.5H521.5V356.5H522.5V354.5H526.5V353.5H527.5V352.5H535.5V353.5H536.5V356.5H537.5V359.5H538.5V363.5H539.5V368.5H540.5V373.5H541.5V380.5H542.5V387.5H543.5V395.5H544.5V401.5H545.5V408.5H546.5V415.5H547.5V419.5H548.5V422.5H549.5V425.5H550.5V428.5H551.5V430.5H552.5V431.5H553.5V432.5H557.5V431.5H558.5V430.5H559.5V428.5H563.5V429.5H564.5V430.5H565.5V431.5H566.5V432.5H571.5V431.5H572.5V428.5H573.5V426.5H574.5V423.5H575.5V419.5H576.5V414.5H577.5V409.5H578.5V402.5H579.5V396.5H580.5V389.5H581.5V383.5H582.5V376.5H583" stroke="#FFFF00" fill="none"/>
<path d="M301 105H312V113L306.5 118.5L301 113Z" fill="#FFAA5A" shape-rendering="auto"/>
<path d="M10 346H22L27 351.5L22 357H10Z" fill="#00FF00" shape-rendering="auto"/>
<path d="M10 422H22L27 427.5L22 433H10Z" fill="#FFFF00" shape-rendering="auto"/>
<path d="M604 422H592L586.5 427.5L592 433H604Z" fill="#FFFF00" shape-rendering="auto"/>
</svg>
<div class="t" style="left:303.5px;top:105.5px;font-size:11px;line-height:10px;height:10px;color:#000">T</div>
<div class="t" style="left:302.5px;top:75px;font-size:8.5px;line-height:10px;height:10px;color:#FFA850">T</div>
<div class="t" style="left:13.5px;top:344.8px;font-family:'Liberation Serif',serif;font-size:14px;line-height:13px;height:13px;color:#000">1</div>
<div class="t" style="left:13.3px;top:420.8px;font-family:'Liberation Serif',serif;font-size:14px;line-height:13px;height:13px;color:#000">2</div>
<div class="t" style="left:594.7px;top:423.3px;font-size:11px;line-height:10px;height:10px;color:#000">T</div>
<div class="grp" style="left:609px;top:82px;width:182px;height:99px;"></div>
<div class="a" style="left:674px;top:81px;width:52px;height:3px;background:#D4D0C8"></div>
<div class="t" style="left:676px;top:75.5px;letter-spacing:-0.053px;">Horizontal</div>
<div class="grp" style="left:609px;top:194px;width:182px;height:221px;"></div>
<div class="a" style="left:680px;top:193px;width:40px;height:3px;background:#D4D0C8"></div>
<div class="t" style="left:682px;top:187.5px;letter-spacing:0.115px;">Vertical</div>
<div class="grp" style="left:609px;top:428px;width:182px;height:137px;"></div>
<div class="a" style="left:681px;top:427px;width:38px;height:3px;background:#D4D0C8"></div>
<div class="t" style="left:683px;top:421.5px;letter-spacing:0.080px;">Trigger</div>
<div class="t" style="left:620px;top:89px;letter-spacing:-0.355px;">Time / DIV</div>
<div class="sunk" style="left:618px;top:106px;width:62px;height:22px;background:#fff"></div>
<div class="cbtn" style="left:663px;top:108px;width:16px;height:18px;"></div>
<svg class="a" style="left:667px;top:116px" width="8" height="4" shape-rendering="crispEdges"><path d="M0 0H7L3.5 4Z" fill="#000"/></svg>
<div class="t" style="left:622.5px;top:110px;color:#000;letter-spacing:-0.005px;">40.0ns</div>
<div class="t" style="left:620.5px;top:136px;letter-spacing:-0.224px;">Format</div>
<div class="sunk" style="left:618px;top:152px;width:62px;height:22px;background:#D4D0C8"></div>
<div class="cbtn" style="left:663px;top:154px;width:16px;height:18px;"></div>
<svg class="a" style="left:667px;top:162px" width="8" height="4" shape-rendering="crispEdges"><path d="M0 0H7L3.5 4Z" fill="#808080"/></svg>
<div class="t" style="left:622.5px;top:156px;color:#808080;letter-spacing:0.312px;">Y - T</div>
<div class="sunk" style="left:618px;top:206px;width:13px;height:13px;background:#fff"></div>
<svg class="a" style="left:621px;top:209px" width="7" height="7" shape-rendering="crispEdges"><path d="M0 2v3h1v1h1v1h1v-1h1v-1h1v-1h1v-1h1v-3h-1v1h-1v1h-1v1h-1v1h-1v-1h-1v-1z" fill="#000"/></svg>
<div class="t" style="left:636px;top:205px;letter-spacing:-1.005px;">CH1</div>
<div class="sunk" style="left:618px;top:224px;width:59px;height:22px;background:#fff"></div>
<div class="cbtn" style="left:660px;top:226px;width:16px;height:18px;"></div>
<svg class="a" style="left:664px;top:234px" width="8" height="4" shape-rendering="crispEdges"><path d="M0 0H7L3.5 4Z" fill="#000"/></svg>
<div class="t" style="left:622.5px;top:228px;color:#000;letter-spacing:0.150px;">1.00V</div>
<div class="sunk" style="left:618px;top:252px;width:59px;height:22px;background:#fff"></div>
<div class="cbtn" style="left:660px;top:254px;width:16px;height:18px;"></div>
<svg class="a" style="left:664px;top:262px" width="8" height="4" shape-rendering="crispEdges"><path d="M0 0H7L3.5 4Z" fill="#000"/></svg>
<div class="t" style="left:622.5px;top:256px;color:#000;letter-spacing:-0.695px;">DC</div>
<div class="sunk" style="left:618px;top:280px;width:59px;height:22px;background:#fff"></div>
<div class="cbtn" style="left:660px;top:282px;width:16px;height:18px;"></div>
<svg class="a" style="left:664px;top:290px" width="8" height="4" shape-rendering="crispEdges"><path d="M0 0H7L3.5 4Z" fill="#000"/></svg>
<div class="t" style="left:622.5px;top:284px;color:#000;letter-spacing:0.051px;">x 10</div>
<div class="sunk" style="left:618px;top:313px;width:13px;height:13px;background:#fff"></div>
<svg class="a" style="left:621px;top:316px" width="7" height="7" shape-rendering="crispEdges"><path d="M0 2v3h1v1h1v1h1v-1h1v-1h1v-1h1v-1h1v-3h-1v1h-1v1h-1v1h-1v1h-1v-1h-1v-1z" fill="#000"/></svg>
<div class="t" style="left:636px;top:312px;letter-spacing:-1.005px;">CH2</div>
<div class="sunk" style="left:618px;top:330px;width:59px;height:22px;background:#fff"></div>
<div class="cbtn" style="left:660px;top:332px;width:16px;height:18px;"></div>
<svg class="a" style="left:664px;top:340px" width="8" height="4" shape-rendering="crispEdges"><path d="M0 0H7L3.5 4Z" fill="#000"/></svg>
<div class="t" style="left:622.5px;top:334px;color:#000;letter-spacing:0.150px;">1.00V</div>
<div class="sunk" style="left:618px;top:358px;width:59px;height:22px;background:#fff"></div>
<div class="cbtn" style="left:660px;top:360px;width:16px;height:18px;"></div>
<svg class="a" style="left:664px;top:368px" width="8" height="4" shape-rendering="crispEdges"><path d="M0 0H7L3.5 4Z" fill="#000"/></svg>
<div class="t" style="left:622.5px;top:362px;color:#000;letter-spacing:-0.695px;">DC</div>
<div class="sunk" style="left:618px;top:386px;width:59px;height:22px;background:#fff"></div>
<div class="cbtn" style="left:660px;top:388px;width:16px;height:18px;"></div>
<svg class="a" style="left:664px;top:396px" width="8" height="4" shape-rendering="crispEdges"><path d="M0 0H7L3.5 4Z" fill="#000"/></svg>
<div class="t" style="left:622.5px;top:390px;color:#000;letter-spacing:0.051px;">x 10</div>
<div class="t" style="left:617.5px;top:449px;letter-spacing:-0.168px;">Trigger Mode</div>
<div class="sunk" style="left:711px;top:446px;width:61px;height:22px;background:#fff"></div>
<div class="cbtn" style="left:755px;top:448px;width:16px;height:18px;"></div>
<svg class="a" style="left:759px;top:456px" width="8" height="4" shape-rendering="crispEdges"><path d="M0 0H7L3.5 4Z" fill="#000"/></svg>
<div class="t" style="left:715.5px;top:450px;color:#000;letter-spacing:-0.426px;">Edge</div>
<div class="t" style="left:617.5px;top:479px;letter-spacing:0.106px;">Trigger Sweep</div>
<div class="sunk" style="left:711px;top:476px;width:61px;height:22px;background:#fff"></div>
<div class="cbtn" style="left:755px;top:478px;width:16px;height:18px;"></div>
<svg class="a" style="left:759px;top:486px" width="8" height="4" shape-rendering="crispEdges"><path d="M0 0H7L3.5 4Z" fill="#000"/></svg>
<div class="t" style="left:715.5px;top:480px;color:#000;letter-spacing:0.090px;">Auto</div>
<div class="t" style="left:617.5px;top:508px;letter-spacing:0.011px;">Trigger Source</div>
<div class="sunk" style="left:711px;top:505px;width:61px;height:22px;background:#fff"></div>
<div class="cbtn" style="left:755px;top:507px;width:16px;height:18px;"></div>
<svg class="a" style="left:759px;top:515px" width="8" height="4" shape-rendering="crispEdges"><path d="M0 0H7L3.5 4Z" fill="#000"/></svg>
<div class="a" style="left:714px;top:508px;width:41px;height:16px;background:#0A246A;outline:1px dotted #E0D060;outline-offset:-1px"></div>
<div class="t" style="left:715.5px;top:509px;color:#fff;letter-spacing:-0.172px;">CH2</div>
<div class="t" style="left:617.5px;top:538px;letter-spacing:-0.087px;">Trigger Slope</div>
<div class="sunk" style="left:711px;top:535px;width:61px;height:22px;background:#fff"></div>
<div class="cbtn" style="left:755px;top:537px;width:16px;height:18px;"></div>
<svg class="a" style="left:759px;top:545px" width="8" height="4" shape-rendering="crispEdges"><path d="M0 0H7L3.5 4Z" fill="#000"/></svg>
<div class="t" style="left:715.5px;top:539.8px;color:#000;font-size:10px;">+</div>
<svg class="a" style="left:694.9px;top:89.4px" width="90" height="90" viewBox="-45 -45 90 90">
<path d="M-23.55 26.04A35.9 34.5 0 1 1 23.55 26.04" fill="none" stroke="#EEE9E2" stroke-width="2.4"/>
<path d="M-24.54 27.17A37.4 36 0 1 1 24.54 27.17" fill="none" stroke="#000" stroke-width="1.25"/>
<ellipse rx="31.2" ry="30" fill="none" stroke="#B2B2B2" stroke-width="6.4"/>
<path d="M-22.06 21.21A31.2 30 0 0 1 22.06 -21.21" fill="none" stroke="#D0D0D0" stroke-width="6.4"/>
<ellipse rx="34.4" ry="33" fill="none" stroke="#000" stroke-width="1.25"/>
<ellipse rx="28" ry="27" fill="#3232FF" stroke="#1a1a1a" stroke-width="0.8"/>
<path d="M-23.6 23.2 L-31.4 30.3 M24.1 23.2 L30.9 30.3" stroke="#000" stroke-width="1.5"/>
<path d="M5.6 2.6L21 9.6" stroke="#fff" stroke-width="1.8"/>
</svg>
<svg class="a" style="left:694.9px;top:215.39999999999998px" width="90" height="90" viewBox="-45 -45 90 90">
<path d="M-23.55 26.04A35.9 34.5 0 1 1 23.55 26.04" fill="none" stroke="#EEE9E2" stroke-width="2.4"/>
<path d="M-24.54 27.17A37.4 36 0 1 1 24.54 27.17" fill="none" stroke="#000" stroke-width="1.25"/>
<ellipse rx="31.2" ry="30" fill="none" stroke="#B2B2B2" stroke-width="6.4"/>
<path d="M-22.06 21.21A31.2 30 0 0 1 22.06 -21.21" fill="none" stroke="#D0D0D0" stroke-width="6.4"/>
<ellipse rx="34.4" ry="33" fill="none" stroke="#000" stroke-width="1.25"/>
<ellipse rx="28" ry="27" fill="#00FF00" stroke="#1a1a1a" stroke-width="0.8"/>
<path d="M-23.6 23.2 L-31.4 30.3 M24.1 23.2 L30.9 30.3" stroke="#000" stroke-width="1.5"/>
<path d="M3.6 -5.2L14.6 -17.7" stroke="#fff" stroke-width="1.8"/>
</svg>
<svg class="a" style="left:694.9px;top:320.4px" width="90" height="90" viewBox="-45 -45 90 90">
<path d="M-23.55 26.04A35.9 34.5 0 1 1 23.55 26.04" fill="none" stroke="#EEE9E2" stroke-width="2.4"/>
<path d="M-24.54 27.17A37.4 36 0 1 1 24.54 27.17" fill="none" stroke="#000" stroke-width="1.25"/>
<ellipse rx="31.2" ry="30" fill="none" stroke="#B2B2B2" stroke-width="6.4"/>
<path d="M-22.06 21.21A31.2 30 0 0 1 22.06 -21.21" fill="none" stroke="#D0D0D0" stroke-width="6.4"/>
<ellipse rx="34.4" ry="33" fill="none" stroke="#000" stroke-width="1.25"/>
<ellipse rx="28" ry="27" fill="#FFFF00" stroke="#1a1a1a" stroke-width="0.8"/>
<path d="M-23.6 23.2 L-31.4 30.3 M24.1 23.2 L30.9 30.3" stroke="#000" stroke-width="1.5"/>
<path d="M3.6 -5.2L14.6 -17.7" stroke="#fff" stroke-width="1.8"/>
</svg>
<div class="t" style="left:5.5px;top:581px;letter-spacing:-0.135px;">Connected</div>
<div class="t" style="left:113.5px;top:581px;letter-spacing:-0.116px;">Freq = 20.947 MHz</div>
<div class="t" style="left:231.5px;top:581px;letter-spacing:-0.108px;">Time = 47.740 nS</div>
<div class="a" style="left:466px;top:580px;width:203px;height:16px;box-shadow:inset 1px 1px 0 #808080,inset -1px -1px 0 #fff"></div>
<div class="t" style="left:674.5px;top:581px;letter-spacing:-0.025px;">17-12-2016&nbsp; 23:59</div>
<svg class="a" style="left:783px;top:583px" width="13" height="13"><path d="M12.5 1.5L1.5 12.5M12.5 5.5L5.5 12.5M12.5 9.5L9.5 12.5" stroke="#808080" stroke-width="1.8"/><path d="M12 0L0 12M12 4L4 12M12 8L8 12" stroke="#fff" stroke-width="1"/></svg>
</body></html>
